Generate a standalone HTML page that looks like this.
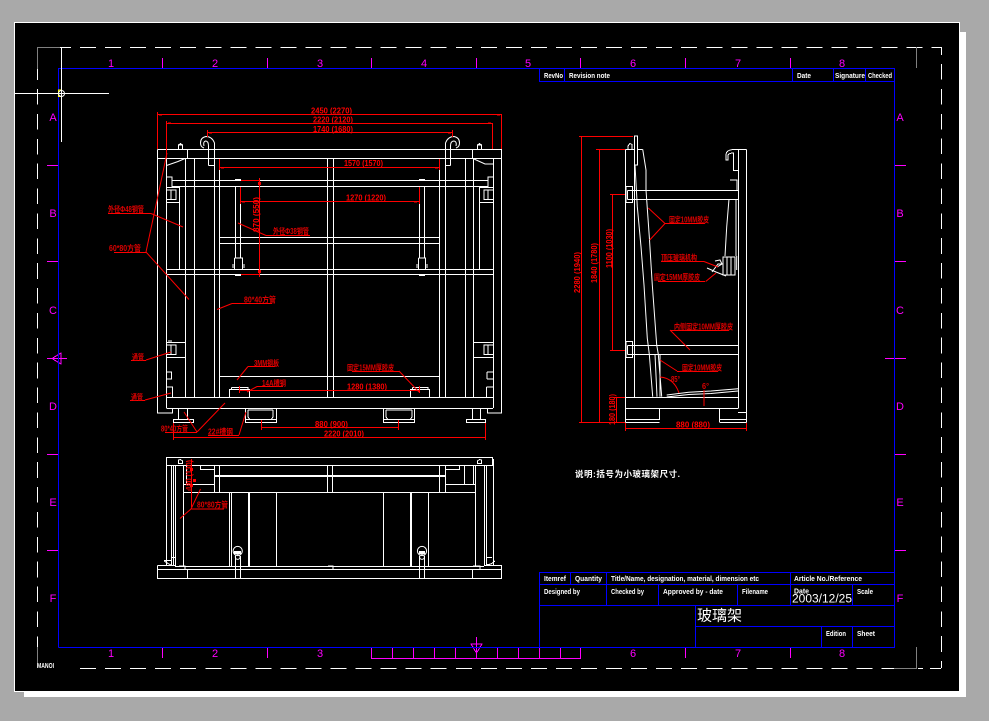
<!DOCTYPE html>
<html><head><meta charset="utf-8"><title>玻璃架</title>
<style>
html,body{margin:0;padding:0;background:#a9a9a9;width:989px;height:721px;overflow:hidden}
svg{display:block;position:absolute;left:0;top:0}
text{font-family:"Liberation Sans","Noto Sans CJK SC",sans-serif}
.l{fill:none;stroke:#fff;stroke-width:1;shape-rendering:crispEdges}
.c{fill:none;stroke:#fff;stroke-width:1}
.r{fill:none;stroke:#f00;stroke-width:1;shape-rendering:crispEdges}
.rc{fill:none;stroke:#f00;stroke-width:1}
.b{fill:none;stroke:#00f;stroke-width:1;shape-rendering:crispEdges}
.m{fill:none;stroke:#f0f;stroke-width:1;shape-rendering:crispEdges}
.n{fill:#f0f;font-size:11px;text-anchor:middle}
.d{fill:#f00;font-size:8px;font-weight:bold}
.t{fill:#d00;font-size:8px;font-weight:bold}
.w{fill:#fff;font-size:7.5px;font-weight:bold}
</style></head><body>
<svg width="989" height="721" viewBox="0 0 989 721" xmlns="http://www.w3.org/2000/svg">
<rect x="24" y="32" width="942" height="665" fill="#fff"/>
<rect x="14" y="22" width="946" height="670" fill="#fff"/>
<rect x="15" y="23" width="944" height="668" fill="#000"/>

<!-- dashed frame -->
<g fill="none" stroke="#fff" shape-rendering="crispEdges">
<path d="M80 47.5H941" stroke-dasharray="16 9.05"/>
<path d="M80 668.5H896" stroke-dasharray="16 9.05"/>
<path d="M60 47.5H71M918 668.5H923M930 668.5H941"/>
<path d="M37.5 89V647" stroke-dasharray="15.6 9.28"/>
<path d="M37.5 69V80"/>
<path d="M941.5 64V668" stroke-dasharray="15.6 9.28"/>
<path d="M941.5 47V55M941.5 661V668"/>
</g>
<path d="M37.5 69V47.5H60M37.5 647V668M894 668.5H916.5V647M916.5 47V68" fill="none" stroke="#808080" shape-rendering="crispEdges"/>
<text x="37" y="668" fill="#fff" font-size="7" font-weight="bold" textLength="17" lengthAdjust="spacingAndGlyphs">MANOI</text>

<!-- magenta grid -->
<path class="m" d="M162.5 58V68M267.5 58V68M371.5 58V68M476.5 58V68M580.5 58V68M685.5 58V68M790.5 58V68
M162.5 647V658M267.5 647V658M371.5 647V658.5H581M392.5 647V658M413.5 647V658M434.5 647V658M455.5 647V658M476.5 637V658M497.5 647V658M518.5 647V658M539.5 647V658M560.5 647V658M580.5 647V658M685.5 647V658M790.5 647V658
M47 165.5H58M47 261.5H58M47 454.5H58M47 550.5H58M895 165.5H906M895 261.5H906M895 454.5H906M895 550.5H906M885 358.5H906M47 358.5H67
M471 644H482L476.5 653ZM52 358.5L61 353V364Z"/>
<g class="n">
<text x="111" y="67">1</text><text x="215" y="67">2</text><text x="320" y="67">3</text><text x="424" y="67">4</text><text x="528" y="67">5</text><text x="633" y="67">6</text><text x="738" y="67">7</text><text x="842" y="67">8</text>
<text x="111" y="657">1</text><text x="215" y="657">2</text><text x="320" y="657">3</text><text x="633" y="657">6</text><text x="738" y="657">7</text><text x="842" y="657">8</text>
<text x="53" y="121">A</text><text x="53" y="217">B</text><text x="53" y="314">C</text><text x="53" y="410">D</text><text x="53" y="506">E</text><text x="53" y="602">F</text>
<text x="900" y="121">A</text><text x="900" y="217">B</text><text x="900" y="314">C</text><text x="900" y="410">D</text><text x="900" y="506">E</text><text x="900" y="602">F</text>
</g>

<!-- blue frame and tables -->
<path class="b" d="M58.5 647.5V68.5H894.5V647.5H58.5
M539.5 68V81.5H894M564.5 68V81M792.5 68V81M833.5 68V81M865.5 68V81
M539.5 572.5H894M539.5 584.5H894M539.5 605.5H894M695.5 626.5H894M539.5 572V647M570.5 572V584M606.5 572V606M658.5 584V606M737.5 584V606M790.5 572V606M852.5 584V606M695.5 606V647M821.5 626V647M852.5 626V647"/>

<!-- crosshair -->
<path d="M14 93.5H109M61.5 47V142" fill="none" stroke="#fff" shape-rendering="crispEdges"/>
<path d="M61 90H58.5V96.5H61" fill="none" stroke="#ff0" shape-rendering="crispEdges"/>
<circle cx="61.5" cy="93.5" r="3" fill="none" stroke="#fff"/>

<!-- front view -->
<path class="l" d="M157.5 149.5H501.5V413H487.5V408.5M157.5 149.5V413H172.5V408.5M157.5 158.5H501.5M187.5 149.5V158M472.5 149.5V158
M166.5 158V408M493.5 158V408M166.5 397.5H493M166.5 408.5H493
M185.5 158V397M194.5 158V397M214.5 165V397M219.5 158V397M179.5 187V270
M327.5 158V397M333.5 158V397M439.5 158V397M445.5 165V397M465.5 158V397M473.5 158V397M479.5 187V270
M172 180.5H488M172 186.5H488M166.5 269.5H493M166.5 274.5H493
M219 237.5H439M219 243.5H439M219 376.5H439
M166.5 177H172V187.5H166.5M166.5 190H176V199.5H166.5M171 190V199.5M166.5 187.5H179.5M166.5 202.5H179.5
M493 177H488V187.5H493M493 190H484V199.5H493M488 190V199.5M479 187.5H493M479 202.5H493
M235.5 187V258M240.5 187V258M234.5 258H242.5V269M234.5 258V269M233 264V268M244 264V268M235 179.5H241M235 275.5H241
M419.5 187V258M424.5 187V258M418.5 258H425.5V269M418.5 258V269M417 264V268M427 264V268M419 179.5H425M419 275.5H425
M166.5 342.5H185M166.5 357.5H185M166.5 345H176V354.5H166.5M171 345V354.5M168 341H172M166.5 372H171.5V379H166.5M166.5 387H172.5V397M168 387H172
M473.5 342.5H493M473.5 357.5H493M493 345H484V354.5H493M488 345V354.5M487 372H493M487 379H493M487 372V379M486.5 387H493M486.5 387V397
M229.5 397V389.5H249.5V397M231.5 387.5H248V389.5M231.5 387.5V389.5
M410.5 397V389.5H429.5V397M412.5 387.5H428V389.5M412.5 387.5V389.5
M178.5 408V419.5M187.5 408V419.5M173.5 419.5H193.5V422.5H173.5Z
M245.5 408V422.5H276.5V408M245.5 419.5H276.5M248 410V417L249.5 419M273 410V417L271.5 419M248 410H273
M383.5 408V422.5H414.5V408M383.5 419.5H414.5M386 410V417L387.5 419M412 410V417L410.5 419M386 410H412
M472.5 408V419.5M480.5 408V419.5M466.5 419.5H485.5V422.5H466.5Z
M208.5 165.5H214.5M450.5 165.5H445.5
M178.5 149V145H182.5V149M178.5 145L180.5 143.5L182.5 145M477.5 149V145H481.5V149M477.5 145L479.5 143.5L481.5 145"/>
<path class="c" d="M166.5 165.5L178 161.5L185 158.5M474 159L485 164H493
M214.5 165.5V143Q212 136.5 206 136.5Q200.5 137.5 200.5 143Q200.5 147 204 148
M208.5 165.5V146Q208.5 141 205.5 141Q203 141.5 204 146
M445.5 165.5V143Q448 136.5 454 136.5Q459.5 137.5 459.5 143Q459.5 147 456 148
M450.5 165.5V146Q450.5 141 454 141Q457 141.5 456 146"/>

<!-- front red dims -->
<path class="r" d="M157.5 112V149M157.5 114.5H501.5V149M166.5 121V158M166.5 123.5H492.5V149M207.5 130V137M207.5 132.5H452.5V130M452.5 130V137
M219.5 159V170M219.5 167.5H439.5V159M439.5 170V159M240.5 187V204M240.5 201.5H419.5M419.5 187V204
M241 180.5H260M241 274.5H260M259.5 178V277
M239.5 386V393M239.5 390.5H419.5V386M419.5 386V393M261.5 420V430M261.5 427.5H398.5M398.5 420V430M173.5 423V440M173.5 437.5H485.5M485.5 423V440
M108 213.5H151M114 252.5H146M266 235.5H310M232 303.5H272M131 360.5H146M130 400.5H145M248 366.5H275M257 386.5H283M165 432.5H197M208 435.5H239M352 371.5H399"/>
<path class="rc" d="M146 252L167 153M151 213.5L183 227M146 252L189 299.5M266 235.5L238 223M232 303.5L217 309.5M146 360L171 352M145 400L171 393M248 366.5L237 380M257 386.5L247 392M197 432L184 412M197 432L225 403M239 435L246 412M399 371L419 392"/>
<g fill="#f00" shape-rendering="crispEdges"><rect x="159" y="114" width="3" height="1.5"/><rect x="168" y="122.5" width="3" height="1.5"/><rect x="209" y="132" width="3" height="1.5"/><rect x="221" y="167" width="3" height="1.5"/><rect x="242" y="201" width="3" height="1.5"/><rect x="497" y="114" width="3" height="1.5"/><rect x="488" y="122.5" width="3" height="1.5"/><rect x="448" y="132" width="3" height="1.5"/><rect x="435" y="167" width="3" height="1.5"/><rect x="414" y="201" width="3" height="1.5"/><rect x="258" y="182" width="3" height="3"/><rect x="258" y="270" width="3" height="3"/></g>
<g class="d">
<text x="311" y="113.5" textLength="41" lengthAdjust="spacingAndGlyphs">2450 (2270)</text>
<text x="313" y="122.5" textLength="40" lengthAdjust="spacingAndGlyphs">2220 (2120)</text>
<text x="313" y="132" textLength="40" lengthAdjust="spacingAndGlyphs">1740 (1680)</text>
<text x="344" y="166" textLength="39" lengthAdjust="spacingAndGlyphs">1570 (1570)</text>
<text x="346" y="200.5" textLength="40" lengthAdjust="spacingAndGlyphs">1270 (1220)</text>
<text x="347" y="389.5" textLength="40" lengthAdjust="spacingAndGlyphs">1280 (1380)</text>
<text x="315" y="427" textLength="33" lengthAdjust="spacingAndGlyphs">880 (900)</text>
<text x="324" y="436.5" textLength="40" lengthAdjust="spacingAndGlyphs">2220 (2010)</text>
<text transform="translate(259 232) rotate(-90)" textLength="35" lengthAdjust="spacingAndGlyphs">870 (550)</text>
</g>
<g class="t">
<text x="108" y="212" textLength="36" lengthAdjust="spacingAndGlyphs">外径Φ48钢管</text>
<text x="109" y="251" textLength="32" lengthAdjust="spacingAndGlyphs">60*80方管</text>
<text x="273" y="234" textLength="36" lengthAdjust="spacingAndGlyphs">外径Φ38钢管</text>
<text x="244" y="302.5" textLength="32" lengthAdjust="spacingAndGlyphs">80*40方管</text>
<text x="132" y="360" textLength="12" lengthAdjust="spacingAndGlyphs">通管</text>
<text x="131" y="400" textLength="12" lengthAdjust="spacingAndGlyphs">通管</text>
<text x="254" y="366" textLength="25" lengthAdjust="spacingAndGlyphs">3MM钢板</text>
<text x="262" y="386" textLength="24" lengthAdjust="spacingAndGlyphs">14A槽钢</text>
<text x="161" y="431.5" textLength="27" lengthAdjust="spacingAndGlyphs">80*40方管</text>
<text x="208" y="434.5" textLength="25" lengthAdjust="spacingAndGlyphs">22#槽钢</text>
<text x="347" y="370.5" textLength="47" lengthAdjust="spacingAndGlyphs">固定15MM厚胶皮</text>
</g>

<!-- plan view -->
<path class="l" d="M166.5 457.5H492.5V465.5H166.5ZM166.5 465V565M493.5 459V565M171.5 465V565M173.5 465V565M175.5 465V566M183.5 465V566M484.5 465V566M486.5 465V565M475.5 465V566
M157.5 565.5H175M484 565.5H501.5V578.5H157.5V565.5M157.5 569.5H501.5M175 566.5H484M187.5 569.5V578M472.5 569.5V578M235.5 556V578M240.5 556V578M419.5 556V578M424.5 556V578
M214.5 465V492M219.5 465V492M327.5 465V492M332.5 465V492M439.5 465V492M445.5 465V492
M214 475.5H445M214 476.5H445M183.5 492.5H475.5M183.5 484.5H214M445 484.5H475.5M186.5 465V484M464.5 465V484M473.5 465V484
M200.5 465V469.5H214M459.5 465V469.5H446
M229.5 492V566M231.5 492V566M248.5 492V566M249.5 492V566M276.5 492V566M383.5 492V566M410.5 492V566M411.5 492V566M428.5 492V566
M164 560.5H171M171 557.5H175M164 561L169 564L171 565M486 557.5H492M495 561L491 564L486 565
M179 566H185V570M328 566H333V570M473 566H480V570
M178.5 463.5V460L180.5 459.5L182.5 461V463.5ZM481.5 463.5V460L479.5 459.5L477.5 461V463.5Z"/>
<g fill="none" stroke="#fff"><circle cx="237.7" cy="551" r="4.6"/><circle cx="422" cy="551" r="4.6"/><circle cx="237.7" cy="557" r="2.4"/><circle cx="422" cy="557" r="2.4"/></g>
<g fill="#fff"><rect x="234" y="551" width="7" height="3"/><rect x="419" y="551" width="6" height="3"/></g>
<path class="r" d="M191.5 459V507M191.5 509H224M188 490H192"/>
<path class="rc" d="M191 509L200.5 489M191 509L180 518.5"/>
<g fill="#f00"><rect x="190" y="468" width="3" height="3"/><rect x="193" y="479" width="3" height="3"/><rect x="190" y="484" width="3" height="3"/></g>
<text class="d" transform="translate(192 490) rotate(-90)" textLength="30" lengthAdjust="spacingAndGlyphs">180 (130)</text>
<text class="t" x="197" y="507.5" textLength="31" lengthAdjust="spacingAndGlyphs">80*80方管</text>

<!-- side view -->
<path class="l" d="M625.5 149.5V422.5M634.5 136V165H637.5V136ZM625.5 149.5H634M637.5 149.5H642.5M634.5 165V397
M738.5 149.5V408.5M746.5 149.5V422.5M733.5 149.5H746.5M733.5 149.5Q726 150 726 155V160H728V155Q729 153 733.5 153V170.5H738
M627.5 190.5H738M627.5 199.5H738M627.5 190.5V199.5M626 186.5H632.5V202.5H626ZM627.5 345.5H738M627.5 354.5H738M627.5 345.5V354.5M626 341.5H632.5V357.5H626Z
M625.5 397.5H738M625.5 408.5H738M625.5 419.5H659.5V408M719.5 408V419.5H746.5M625.5 422.5H659.5M719.5 422.5H746.5M719.5 419V422M738 412.5H746.5
M628 146V149.5M628 146L630 143.5L632 144.5V149.5H628"/>
<path class="c" d="M635 165L637.3 206.7L641 246.7L644 285L647.3 338.3L649.3 354.3L652.7 396.7M642.7 149.3L646 170V190L649.3 236.7L652.3 285L656.7 345L658.3 354.3L661.7 396.7M660 354V396.7M655 354L657 396.7
M730 180H737V190M729 199L726.7 227L725 256M736 199V256M736.7 256V270
M723 257H735V275H723ZM727 257V275M731 257V275M707 268L716 272L726 276M712 272L718 264H723M715 261L720 260L722 264L717 267
M666.7 395L688.7 392.3L711 391L738 388.7M666.7 397L688.7 394.5L711 393.5L738 391"/>
<path class="r" d="M579 136.5H633M581.5 136V422.5M596 149.5H625M599.5 149V422.5M610 194.5H625M612.5 194V350.5M610 350.5H625M579 422.5H625M616.5 397.5V422.5M613 397.5H625M625.5 423V431M746.5 423V431M625.5 428.5H746.5M665 223.5H705M661 261.5H704M658 281.5H705M670 330.5H729M677 371.5H718M704 390V406"/>
<path class="rc" d="M665 223.5L648.3 208M665 223.5L649.7 240M704 261.5L718 267M705.7 281.5L716 273M670 330L690 350M677 371L660 360M660 377Q674 378 679 393"/>
<g class="d">
<text transform="translate(580 293) rotate(-90)" textLength="41" lengthAdjust="spacingAndGlyphs">2280 (1940)</text>
<text transform="translate(597 283) rotate(-90)" textLength="40" lengthAdjust="spacingAndGlyphs">1840 (1780)</text>
<text transform="translate(612 268) rotate(-90)" textLength="39" lengthAdjust="spacingAndGlyphs">1100 (1030)</text>
<text transform="translate(615 425) rotate(-90)" textLength="31" lengthAdjust="spacingAndGlyphs">180 (180)</text>
<text x="676" y="427.5" textLength="34" lengthAdjust="spacingAndGlyphs">880 (880)</text>
</g>
<g class="t">
<text x="669" y="222.5" textLength="40" lengthAdjust="spacingAndGlyphs">固定10MM胶皮</text>
<text x="661" y="260.5" textLength="36" lengthAdjust="spacingAndGlyphs">顶压玻璃机构</text>
<text x="654" y="280" textLength="46" lengthAdjust="spacingAndGlyphs">固定15MM厚胶皮</text>
<text x="674" y="329.5" textLength="59" lengthAdjust="spacingAndGlyphs">内侧固定10MM厚胶皮</text>
<text x="682" y="370.5" textLength="40" lengthAdjust="spacingAndGlyphs">固定10MM胶皮</text>
<text x="671" y="382" textLength="9" lengthAdjust="spacingAndGlyphs">85°</text>
<text x="702" y="389" textLength="7" lengthAdjust="spacingAndGlyphs">6°</text>
</g>

<text x="575" y="477" fill="#fff" font-size="8.5px" font-weight="bold" textLength="105">说明:括号为小玻璃架尺寸.</text>

<!-- tables text -->
<g class="w">
<text x="544" y="78" textLength="19" lengthAdjust="spacingAndGlyphs">RevNo</text>
<text x="569" y="78" textLength="41" lengthAdjust="spacingAndGlyphs">Revision note</text>
<text x="797" y="78" textLength="14" lengthAdjust="spacingAndGlyphs">Date</text>
<text x="835" y="78" textLength="30" lengthAdjust="spacingAndGlyphs">Signature</text>
<text x="868" y="78" textLength="24" lengthAdjust="spacingAndGlyphs">Checked</text>
<text x="544" y="581" textLength="22" lengthAdjust="spacingAndGlyphs">Itemref</text>
<text x="575" y="581" textLength="27" lengthAdjust="spacingAndGlyphs">Quantity</text>
<text x="611" y="581" textLength="148" lengthAdjust="spacingAndGlyphs">Title/Name, designation, material, dimension etc</text>
<text x="794" y="581" textLength="68" lengthAdjust="spacingAndGlyphs">Article No./Reference</text>
<text x="544" y="594" textLength="36" lengthAdjust="spacingAndGlyphs">Designed by</text>
<text x="611" y="594" textLength="33" lengthAdjust="spacingAndGlyphs">Checked by</text>
<text x="663" y="594" textLength="60" lengthAdjust="spacingAndGlyphs">Approved by - date</text>
<text x="742" y="594" textLength="26" lengthAdjust="spacingAndGlyphs">Filename</text>
<text x="794" y="593.5" textLength="15" lengthAdjust="spacingAndGlyphs">Date</text>
<text x="857" y="594" textLength="16" lengthAdjust="spacingAndGlyphs">Scale</text>
<text x="826" y="636" textLength="20" lengthAdjust="spacingAndGlyphs">Edition</text>
<text x="857" y="636" textLength="18" lengthAdjust="spacingAndGlyphs">Sheet</text>
</g>
<text x="792" y="602.5" fill="#fff" font-size="11.5px" textLength="60" lengthAdjust="spacingAndGlyphs">2003/12/25</text>
<text x="697" y="620.5" fill="#fff" font-size="15px" textLength="45">玻璃架</text>
</svg>
</body></html>
